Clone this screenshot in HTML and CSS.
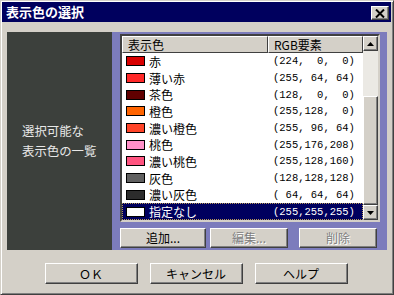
FILE: index.html
```html
<!DOCTYPE html>
<html lang="ja">
<head>
  <meta charset="UTF-8">
  <title>表示色の選択</title>
  <link rel="stylesheet" href="styles.css">
</head>
<body>
  <div class="window">
    <div class="titlebar">
      <span class="title">表示色の選択</span>
      <span class="close">
        <svg width="10" height="9" viewBox="0 0 10 9"><path d="M1 0.5 L9 8.5 M9 0.5 L1 8.5" stroke="#000" stroke-width="2"/></svg>
      </span>
    </div>

    <div class="content">
      <div class="panels">
        <div class="side">
          <p>選択可能な<br>表示色の一覧</p>
        </div>
        <div class="main">
          <div class="listbox">
            <div class="listarea">
              <div class="header">
                <div class="hcell name-col">表示色</div>
                <div class="hcell rgb-col">RGB要素</div>
              </div>
              <div class="rows">
                <div class="row"><div class="name-col"><span class="swatch" style="background:#d80000"></span>赤</div><div class="rgb-col">(224,  0,  0)</div></div>
                <div class="row"><div class="name-col"><span class="swatch" style="background:#ff2828"></span>薄い赤</div><div class="rgb-col">(255, 64, 64)</div></div>
                <div class="row"><div class="name-col"><span class="swatch" style="background:#600000"></span>茶色</div><div class="rgb-col">(128,  0,  0)</div></div>
                <div class="row"><div class="name-col"><span class="swatch" style="background:#ff6400"></span>橙色</div><div class="rgb-col">(255,128,  0)</div></div>
                <div class="row"><div class="name-col"><span class="swatch" style="background:#ff4428"></span>濃い橙色</div><div class="rgb-col">(255, 96, 64)</div></div>
                <div class="row"><div class="name-col"><span class="swatch" style="background:#ff90c8"></span>桃色</div><div class="rgb-col">(255,176,208)</div></div>
                <div class="row"><div class="name-col"><span class="swatch" style="background:#ff5480"></span>濃い桃色</div><div class="rgb-col">(255,128,160)</div></div>
                <div class="row"><div class="name-col"><span class="swatch" style="background:#606060"></span>灰色</div><div class="rgb-col">(128,128,128)</div></div>
                <div class="row"><div class="name-col"><span class="swatch" style="background:#2c2c2c"></span>濃い灰色</div><div class="rgb-col">( 64, 64, 64)</div></div>
                <div class="row selected"><div class="name-col"><span class="swatch" style="background:#ffffff"></span>指定なし</div><div class="rgb-col">(255,255,255)</div></div>
              </div>
            </div>
            <div class="scrollbar">
              <div class="sbtn">
                <svg width="7" height="4" viewBox="0 0 7 4"><polygon points="3.5,0 7,4 0,4" fill="#000"/></svg>
              </div>
              <div class="track">
                <div class="thumb"></div>
              </div>
              <div class="sbtn">
                <svg width="7" height="4" viewBox="0 0 7 4"><polygon points="0,0 7,0 3.5,4" fill="#000"/></svg>
              </div>
            </div>
          </div>

          <div class="actions">
            <button class="btn btn-add">追加...</button>
            <button class="btn btn-edit" disabled>編集...</button>
            <button class="btn btn-del" disabled>削除</button>
          </div>
        </div>
      </div>

      <div class="footer">
        <button class="btn btn-dlg">ＯＫ</button>
        <button class="btn btn-dlg">キャンセル</button>
        <button class="btn btn-dlg">ヘルプ</button>
      </div>
    </div>
  </div>
</body>
</html>
```

FILE: styles.css
```css
body {
  margin: 0;
  padding: 0;
  background-color: #d4d0c8;
  font-family: "Noto Sans CJK JP", "Liberation Sans", sans-serif;
}
.window {
  width: 394px;
  height: 295px;
  box-sizing: border-box;
  background-color: #d4d0c8;
  border: 1px solid;
  border-color: #d4d0c8 #404040 #404040 #d4d0c8;
  box-shadow: inset 1px 1px #fff, inset -1px -1px #808080;
  padding: 1px 2px 2px 1px;
}
.titlebar {
  height: 20px;
  background-color: #00005e;
  display: flex;
  align-items: center;
  justify-content: space-between;
  padding: 0 2px 0 4px;
}
.title {
  color: #fff;
  font-size: 13px;
  font-weight: bold;
  line-height: 20px;
}
.close {
  width: 18px;
  height: 14px;
  box-sizing: border-box;
  background-color: #d4d0c8;
  border: 1px solid;
  border-color: #fff #404040 #404040 #fff;
  box-shadow: inset -1px -1px #808080;
  display: flex;
  align-items: center;
  justify-content: center;
  margin-top: 2px;
}
.content {
  padding: 10px 4px 0 5px;
}
.panels {
  display: flex;
  height: 218px;
}
.side {
  width: 105px;
  background-color: #3c403c;
  display: flex;
  align-items: center;
}
.side p {
  margin: 0;
  padding-left: 15px;
  color: #e8e8e8;
  font-size: 12.4px;
  line-height: 20px;
}
.main {
  flex: 1;
  background-color: #7c7cbc;
  padding: 2px 7px 0 8px;
}
.listbox {
  display: flex;
  height: 188px;
  box-sizing: border-box;
  border: 2px solid;
  border-color: #404040 #d4d0c8 #d4d0c8 #404040;
  background-color: #fff;
}
.listarea {
  flex: 1;
  display: flex;
  flex-direction: column;
}
.header {
  display: flex;
  height: 17px;
}
.hcell {
  box-sizing: border-box;
  background-color: #d4d0c8;
  border: 1px solid;
  border-color: #fff #404040 #404040 #fff;
  font-size: 12px;
  line-height: 15px;
  padding-left: 5px;
  color: #000;
}
.name-col {
  width: 146px;
  display: flex;
  align-items: center;
}
.rgb-col {
  flex: 1;
}
.rows {
  flex: 1;
}
.row {
  display: flex;
  height: 16.7px;
  align-items: center;
  font-size: 12px;
  color: #000;
}
.row .name-col {
  padding-left: 4px;
  box-sizing: border-box;
}
.row .rgb-col {
  padding-left: 5px;
  font-family: "Liberation Mono", monospace;
  font-size: 10.5px;
  white-space: pre;
}
.swatch {
  width: 17px;
  height: 8px;
  border: 1px solid #000;
  margin-right: 4px;
}
.row.selected {
  background-color: #00005e;
  color: #fff;
  outline: 1px dotted #b89a58;
  outline-offset: -1px;
}
.scrollbar {
  width: 15px;
  display: flex;
  flex-direction: column;
  background-color: #d4d0c8;
}
.sbtn {
  height: 15px;
  box-sizing: border-box;
  background-color: #d4d0c8;
  border: 1px solid;
  border-color: #fff #404040 #404040 #fff;
  box-shadow: inset -1px -1px #808080;
  display: flex;
  align-items: center;
  justify-content: center;
}
.track {
  flex: 1;
  background-color: #ebe9e4;
}
.thumb {
  margin-top: 45px;
  height: 109px;
  box-sizing: border-box;
  background-color: #d4d0c8;
  border: 1px solid;
  border-color: #fff #404040 #404040 #fff;
  box-shadow: inset -1px -1px #808080;
}
.actions {
  display: flex;
  margin-top: 6px;
}
.btn {
  height: 20px;
  box-sizing: border-box;
  background-color: #d4d0c8;
  border: 1px solid;
  border-color: #fff #404040 #404040 #fff;
  box-shadow: inset -1px -1px #808080;
  font-family: "Noto Sans CJK JP", "Liberation Sans", sans-serif;
  font-size: 12px;
  line-height: 16px;
  color: #000;
  padding: 0;
}
.btn:disabled {
  color: #808080;
  text-shadow: 1px 1px #fff;
}
.btn-add {
  width: 86px;
}
.btn-edit {
  width: 78px;
  margin-left: 4px;
}
.btn-del {
  width: 78px;
  margin-left: 11px;
}
.footer {
  display: flex;
  justify-content: center;
  gap: 12px;
  margin-top: 13px;
  padding-right: 2px;
}
.btn-dlg {
  width: 93px;
  height: 21px;
}
```
